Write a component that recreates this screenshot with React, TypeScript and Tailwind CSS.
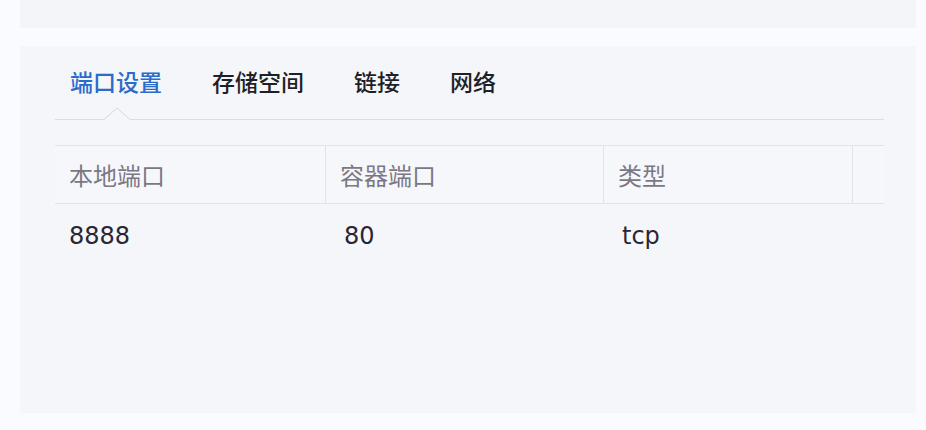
import React from 'react';

const tabs = ['端口设置', '存储空间', '链接', '网络'];

const columns = ['本地端口', '容器端口', '类型', ''];

const rows = [['8888', '80', 'tcp', '']];

function TabBar() {
  return (
    <div className="relative flex h-[74px] items-center gap-[50px] border-b border-[#d9dde4] pl-[15px]">
      {tabs.map((t, i) => (
        <div
          key={t}
          className={
            i === 0
              ? 'text-[23px] font-medium leading-[32px] text-[#2a6bcb]'
              : 'text-[23px] font-medium leading-[32px] text-[#1f1f27]'
          }
        >
          {t}
        </div>
      ))}
      <svg
        className="absolute bottom-[-1px] left-[49px]"
        width="26"
        height="13"
        viewBox="0 0 26 13"
      >
        <polygon points="0,12.5 13,1 26,12.5 26,13 0,13" fill="#f4f6f9" />
        <polyline points="0,12.5 13,1 26,12.5" fill="none" stroke="#d3d7df" strokeWidth="1" />
      </svg>
    </div>
  );
}

function PortTable() {
  return (
    <div className="mt-[25px]">
      <div className="grid grid-cols-[271px_278px_249px_31px] border-y border-[#e0e3e9] bg-[#f6f7fa]">
        {columns.map((c, i) => (
          <div
            key={i}
            className={
              i < 3
                ? 'flex h-[57px] items-center border-r border-[#e0e3e9] pl-[14px] pt-[4px] text-[24px] text-[#7b7785]'
                : 'h-[57px]'
            }
          >
            {c}
          </div>
        ))}
      </div>
      {rows.map((r, ri) => (
        <div key={ri} className="grid grid-cols-[271px_278px_249px_31px]">
          {r.map((v, ci) => (
            <div
              key={ci}
              className={
                ci === 0
                  ? 'flex h-[64px] items-center pl-[14px] text-[24px] text-[#2b2535]'
                  : 'flex h-[64px] items-center pl-[18px] text-[24px] text-[#2b2535]'
              }
            >
              {v}
            </div>
          ))}
        </div>
      ))}
    </div>
  );
}

export default function App() {
  return (
    <div
      className="flex h-[430px] w-[926px] flex-col bg-[#f9fbfe] pl-[20px] pr-[10px]"
      style={{ fontFamily: '"DejaVu Sans", "Noto Sans CJK SC", sans-serif' }}
    >
      <div className="h-[28px] bg-[#f3f5f8]" />
      <div className="mt-[18px] h-[367px] bg-[#f4f6f9] pl-[35px] pr-[32px]">
        <TabBar />
        <PortTable />
      </div>
    </div>
  );
}
